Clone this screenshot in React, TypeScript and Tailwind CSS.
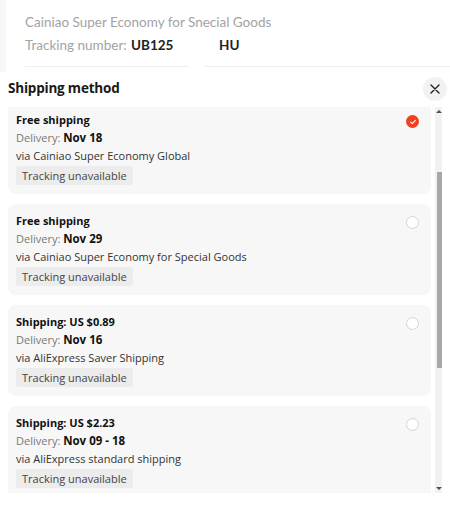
import React from "react";

const options = [
  { title: "Free shipping", date: "Nov 18", via: "via Cainiao Super Economy Global", selected: true },
  { title: "Free shipping", date: "Nov 29", via: "via Cainiao Super Economy for Special Goods", selected: false },
  { title: "Shipping: US $0.89", date: "Nov 16", via: "via AliExpress Saver Shipping", selected: false },
  { title: "Shipping: US $2.23", date: "Nov 09 - 18", via: "via AliExpress standard shipping", selected: false },
];

function Radio({ selected }: { selected: boolean }) {
  if (selected) {
    return (
      <div className="w-[13px] h-[13px] rounded-full bg-[#f2401f] flex items-center justify-center">
        <svg width="8" height="8" viewBox="0 0 8 8">
          <path d="M1.6 4.1 L3.3 5.6 L6.4 2.4" stroke="#fff" strokeWidth="1.1" fill="none" strokeLinecap="round" strokeLinejoin="round" />
        </svg>
      </div>
    );
  }
  return <div className="w-[13px] h-[13px] rounded-full border border-[#d4d4d4] bg-white" />;
}

export default function App() {
  return (
    <div className="w-[450px] h-[508px] bg-white overflow-hidden relative" style={{ fontFamily: '"Open Sans", "Noto Sans", sans-serif' }}>
      {/* background page */}
      <div className="h-[72px] bg-[#f8f8f8] pl-[6px]">
        <div className="h-[72px] bg-white pl-[19px] pt-[12px]" style={{ fontFamily: 'Lato, "Open Sans", sans-serif' }}>
          <div className="text-[13.5px] text-[#a3a3a3] leading-[20px]">Cainiao Super Economy for Snecial Goods</div>
          <div className="flex items-center mt-[3px] text-[13.5px] leading-[20px]">
            <span className="text-[#a3a3a3] w-[106px]">Tracking number:</span>
            <span className="font-bold text-[#222] w-[88px]">UB125</span>
            <span className="font-bold text-[#222]">HU</span>
          </div>
          <div className="flex mt-[11px]">
            <div className="h-px w-[164px] bg-[#eeeeee]" />
            <div className="h-px w-[16px]" />
            <div className="h-px flex-1 bg-[#eeeeee]" />
          </div>
        </div>
      </div>

      {/* sheet */}
      <div className="bg-white">
        <div className="flex items-center justify-between h-[33px] pl-[8px] pr-[3px]">
          <div className="text-[13.5px] font-bold text-[#191919] tracking-[-0.2px]">Shipping method</div>
          <div className="w-[24px] h-[24px] rounded-full bg-[#f2f2f2] flex items-center justify-center">
            <svg width="10" height="10" viewBox="0 0 10 10">
              <path d="M1 1 L9 9 M9 1 L1 9" stroke="#222" strokeWidth="1.4" strokeLinecap="round" />
            </svg>
          </div>
        </div>
        <div className="flex mt-[2px]">
          <div className="pl-[8px] w-[431px] h-[386px] overflow-hidden">
            <div className="flex flex-col gap-[10px] -mt-[4px]">
              {options.map((o, i) => (
                <div key={i} className="w-[423px] shrink-0 rounded-[8px] bg-[#f7f7f7] pl-[8px] pr-[12px] pt-[8px] pb-[9px] flex justify-between">
                  <div className="flex flex-col text-[11px] leading-[18px] text-[#222]">
                    <div className="font-bold text-[#111]">{o.title}</div>
                    <div>
                      <span className="text-[#777]">Delivery: </span>
                      <span className="font-bold text-[#111] text-[11.5px]">{o.date}</span>
                    </div>
                    <div className="text-[#333]">{o.via}</div>
                    <div className="mt-[1px] self-start bg-[#ececec] rounded-[2px] px-[6px] h-[19px] leading-[19px] text-[#444]">Tracking unavailable</div>
                  </div>
                  <div className="pt-[4px]">
                    <Radio selected={o.selected} />
                  </div>
                </div>
              ))}
            </div>
          </div>
          <div className="ml-[4px] w-[7px] h-[386px] bg-[#f1f1f1] relative">
            <div className="absolute left-[1px] top-[3px] w-0 h-0 border-l-[3px] border-r-[3px] border-b-[3px] border-l-transparent border-r-transparent border-b-[#505050]" />
            <div className="absolute left-[2px] right-0 top-[65px] h-[196px] bg-[#a8a8a8]" />
            <div className="absolute left-[1px] bottom-[3px] w-0 h-0 border-l-[3px] border-r-[3px] border-t-[3px] border-l-transparent border-r-transparent border-t-[#505050]" />
          </div>
        </div>
      </div>
    </div>
  );
}
